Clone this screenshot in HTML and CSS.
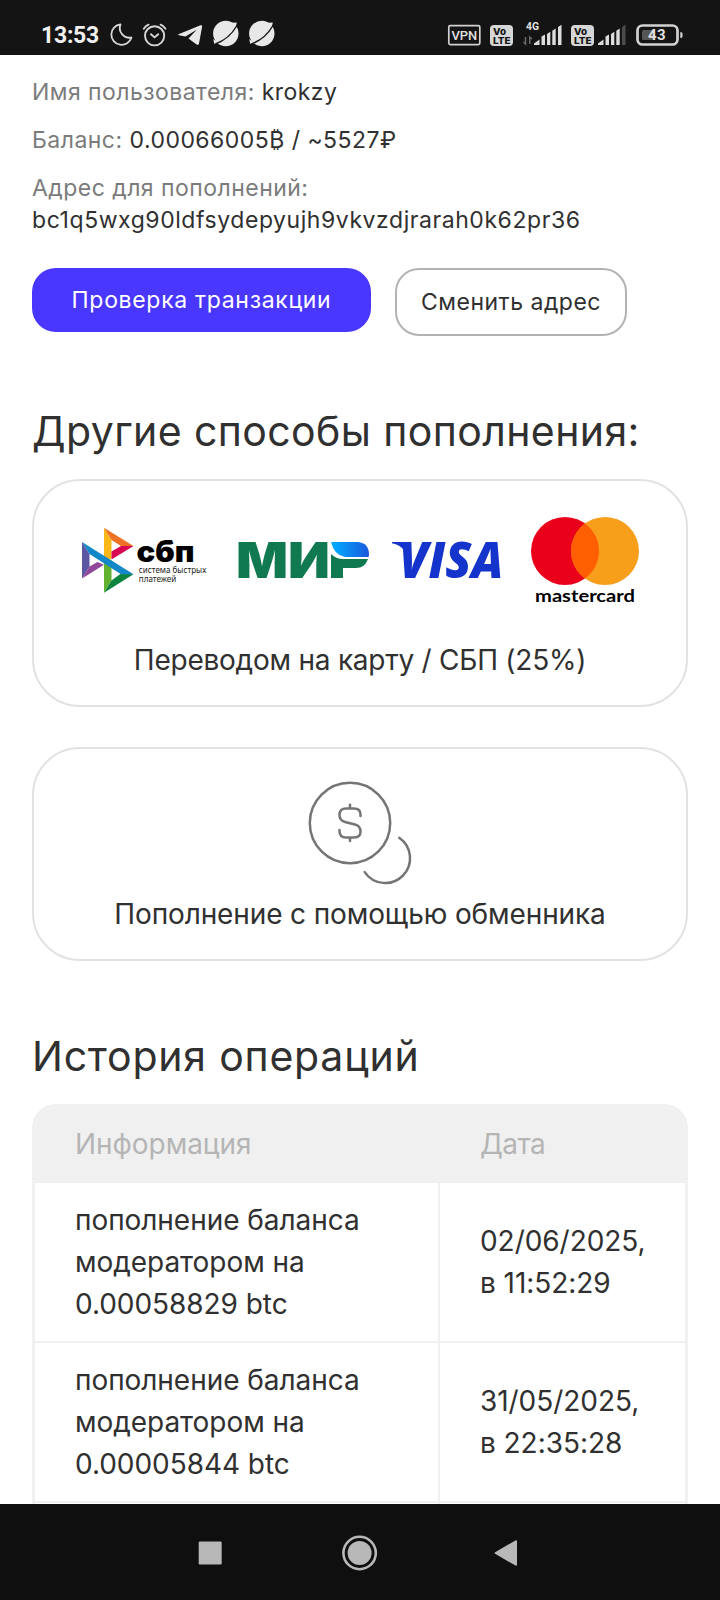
FILE: index.html
```html
<!DOCTYPE html>
<html lang="ru">
<head>
<meta charset="utf-8">
<title>Баланс</title>
<link rel="stylesheet" href="styles.css">
</head>
<body>
<header class="status">
  <span class="clock">13:53</span>
  <svg class="status-left" width="170" height="30" viewBox="108 20 170 30" fill="none">
    <path d="M120.500 24.300A10.300 10.300 0 1 0 131.500 37.500A9.800 9.800 0 0 1 120.500 24.300Z" stroke="#d6d6d6" stroke-width="1.800" stroke-linejoin="round"/>
    <g stroke="#d6d6d6" stroke-width="1.900" stroke-linecap="round" stroke-linejoin="round">
      <circle cx="154.600" cy="35.800" r="9.600"/>
      <path d="M143.800 28.700Q145.500 26 148.600 24.700M165.400 28.700Q163.700 26 160.600 24.700M151 34.200l3.600 3.200 3.600-3.200"/>
    </g>
    <path d="M178.500 34.200L200.500 25.300Q202.500 24.600 202.100 26.800L199 43.500Q198.500 45.600 196.600 44.400L188.500 38.600L196.800 29.800L185.400 36.600L179 35.200Q177.600 34.700 178.500 34.200Z" fill="#e8e8e8"/>
    <g id="planet">
      <circle cx="225.800" cy="33.500" r="12.700" fill="#e8e8e8"/>
      <path d="M232 22.800L236.800 22.400L235.800 27ZM213.300 39L214.200 43.800L218.500 43Z" fill="#e8e8e8"/>
      <path d="M215.500 43.800C224 41 232 34 237 25.500" stroke="#141414" stroke-width="1.400"/>
    </g>
    <use href="#planet" x="36"/>
  </svg>
  <svg class="status-right" width="240" height="30" viewBox="446 20 240 30" fill="none">
    <rect x="448.800" y="25.600" width="31" height="19" rx="1.500" stroke="#d0d0d0" stroke-width="1.700"/>
    <text x="451.500" y="40" class="st" font-size="12.800" textLength="25.800" lengthAdjust="spacingAndGlyphs">VPN</text>
    <g id="volte"><rect x="490" y="25" width="23" height="21" rx="4" fill="#d6d6d6"/>
    <text x="493" y="34.500" class="volte" font-size="9.500" textLength="13" lengthAdjust="spacingAndGlyphs">Vo</text>
    <text x="493" y="43.600" class="volte" font-size="9.500" textLength="17.500" lengthAdjust="spacingAndGlyphs">LTE</text></g>
    <use href="#volte" x="81"/>
    <text x="526" y="30" class="st bold" font-size="10" textLength="13" lengthAdjust="spacingAndGlyphs">4G</text>
    <path d="M525.500 37v7l-2-2M529.800 44v-7l2 2" stroke="#6a6a6a" stroke-width="1.500"/>
    <g fill="#dcdcdc">
      <path d="M534 45V43.600L539.500 39.500V45ZM541.500 45V36.500L545 34.500V45ZM547 45V34L550.300 31.800V45ZM552.300 45V30.800L555.700 28.600V45ZM558 45V27L561.500 24.800V45Z"/>
      <path d="M598 45V43.600L603.500 39.500V45ZM605.500 45V36.500L609 34.500V45ZM611 45V34L614.300 31.800V45ZM616.300 45V30.800L619.700 28.600V45Z"/>
    </g>
    <path d="M622 45V27L625.500 24.800V45Z" fill="#4c4c4c"/>
    <rect x="637.500" y="25.500" width="40" height="19" rx="5" stroke="#d2d2d2" stroke-width="2.700"/>
    <rect x="642" y="30" width="12" height="10" rx="1.500" fill="#555"/>
    <path d="M680.300 32q2.200 0 2.200 1.500v3q0 1.500-2.200 1.500z" fill="#d2d2d2"/>
    <text x="648" y="40.200" class="st bold" font-size="15" textLength="17.500">43</text>
  </svg>
</header>
<main class="page">
  <section class="account">
    <p class="user">Имя пользователя: <span class="val">krokzy</span></p>
    <p>Баланс: <span class="val">0.00066005₿ / ~5527₽</span></p>
    <p>Адрес для пополнений: <span class="val addr">bc1q5wxg90ldfsydepyujh9vkvzdjrarah0k62pr36</span></p>
  </section>
  <div class="actions">
    <button class="btn primary">Проверка транзакции</button>
    <button class="btn outline">Сменить адрес</button>
  </div>
  <h2 class="title other">Другие способы пополнения:</h2>
  <a class="card pay">
    <svg width="564" height="96" viewBox="78 514 564 96">
      <defs>
        <linearGradient id="mir" x1="0" x2="1"><stop offset=".1" stop-color="#03a7ff"/><stop offset="1" stop-color="#1959da"/></linearGradient>
      </defs>
      <path d="M82 542L89.500 554V566.500L82 578.500Z" fill="#5b57a2"/>
      <path d="M82 578.500L89.500 566.500L97.500 562L104 564.800Z" fill="#90489a"/>
      <path d="M104 527.800L111.500 540V558L104 566Z" fill="#fab718"/>
      <path d="M104 527.800L133.500 546H121L111.500 540Z" fill="#ee7125"/>
      <path d="M121 546H133.500L111.500 559.500V551.500Z" fill="#d90751"/>
      <path d="M104 560H111.500V580.500L104 592.800Z" fill="#63b22f"/>
      <path d="M104 592.800L133.500 574.300L121 573.500L111.500 580.500Z" fill="#0c8440"/>
      <path d="M82 542L133.500 574.300H121L89.500 554Z" fill="#1487c9"/>
      <text x="136.500" y="562" class="sbp" font-size="29.500" textLength="58" lengthAdjust="spacingAndGlyphs">сбп</text>
      <text x="138.800" y="573.300" class="tiny" textLength="67.500" lengthAdjust="spacingAndGlyphs">система быстрых</text>
      <text x="138.800" y="581.600" class="tiny" textLength="37.500" lengthAdjust="spacingAndGlyphs">платежей</text>
      <text x="236" y="578" class="mir" font-size="49.500" textLength="94" lengthAdjust="spacingAndGlyphs">МИ</text>
      <path d="M331 542H358Q369 543 369 555L368.500 557H345Q334 555 331 542Z" fill="url(#mir)"/>
      <path d="M331 554Q336 559 343 559H368Q365 568 356 568H343V578H331Z" fill="#10794f"/>
      <text x="399" y="577.500" class="visa" font-size="49" textLength="104.500" lengthAdjust="spacingAndGlyphs">VISA</text>
      <path d="M392 542H406L404 550Q400 545 392 543.300Z" fill="#1434cb"/>
      <circle cx="565" cy="551" r="34" fill="#eb001b"/>
      <circle cx="605" cy="551" r="34" fill="#f79e1b"/>
      <path d="M585 523.500a34 34 0 0 1 0 55a34 34 0 0 1 0-55Z" fill="#ff5f00"/>
      <text x="535" y="602" class="mc" font-size="17.500" textLength="100" lengthAdjust="spacingAndGlyphs">mastercard</text>
    </svg>
    <span class="label l1">Переводом на карту / СБП (25%)</span>
  </a>
  <a class="card exch">
    <svg width="106" height="106" viewBox="307 780 106 106" fill="none" stroke="#757575" stroke-width="2.500" stroke-linecap="round">
      <circle cx="350" cy="823" r="40.200"/>
      <path d="M360.500 816V814.500Q360.500 808.500 354 808.500H346Q339.500 808.500 339.500 815Q339.500 820.500 345 822L355 824.500Q360.500 826 360.500 831.500Q360.500 837.500 354 837.500H346Q339.500 837.500 339.500 831V830M350 808V804.800M350 838V841"/>
      <path d="M399.200 837.700A24.800 24.800 0 1 1 364.700 872.100"/>
    </svg>
    <span class="label l2">Пополнение с помощью обменника</span>
  </a>
  <h2 class="title history">История операций</h2>
  <div class="table">
    <div class="row head"><div class="cell info">Информация</div><div class="cell when">Дата</div></div>
    <div class="row"><div class="cell info">пополнение баланса<br>модератором на<br>0.00058829 btc</div><div class="cell date">02/06/2025,<br>в 11:52:29</div></div>
    <div class="row"><div class="cell info">пополнение баланса<br>модератором на<br>0.00005844 btc</div><div class="cell date">31/05/2025,<br>в 22:35:28</div></div>
    <div class="row"><div class="cell info"></div></div>
  </div>
</main>
<nav class="navbar">
  <svg width="24" height="36" viewBox="0 0 24 36"><rect x=".7" y="6.500" width="23" height="23" rx="1.200" fill="#b8b8b8"/></svg>
  <svg width="36" height="36" viewBox="0 0 36 36"><circle cx="17.600" cy="18" r="16.200" fill="none" stroke="#b8b8b8" stroke-width="2.600"/><circle cx="17.600" cy="18" r="12" fill="#b8b8b8"/></svg>
  <svg class="back" width="24" height="36" viewBox="0 0 24 36"><path d="M1.600 18L22 6.300V29.700Z" fill="#b8b8b8" stroke="#b8b8b8" stroke-width="2" stroke-linejoin="round"/></svg>
</nav>
</body>
</html>
```
FILE: styles.css
```css
* { box-sizing: border-box; }
body {
  margin: 0;
  width: 720px;
  height: 1600px;
  overflow: hidden;
  display: flex;
  flex-direction: column;
  background: #fff;
  color: #303030;
  font-family: Inter, sans-serif;
}
.status {
  height: 55px;
  flex: none;
  display: flex;
  padding: 20px 34px 0 41px;
  background: #141414;
}
.clock {
  width: 67px;
  color: #f0f0f0;
  font: 700 23px/31px Roboto, sans-serif;
  letter-spacing: -.25px;
}
.status-right { margin-left: auto; }
.st { fill: #e0e0e0; font-family: Roboto, sans-serif; font-weight: 500; }
.bold { font-weight: 700; }
.volte { fill: #141414; font-family: Inter, sans-serif; font-weight: 800; }
.page {
  flex: 1;
  min-height: 0;
  overflow: hidden;
  padding: 21px 32px 0;
}
.account {
  display: flex;
  flex-direction: column;
  gap: 16px;
  color: #7b7b7b;
  font-size: 23px;
  line-height: 32px;
  letter-spacing: .47px;
}
.account p { margin: 0; }
.user { letter-spacing: .45px; }
.val { color: #303030; }
.addr { display: block; letter-spacing: .56px; }
.actions {
  display: flex;
  align-items: flex-start;
  gap: 24px;
  margin-top: 32px;
}
.btn {
  padding: 16px 0;
  border: 0;
  border-radius: 24px;
  font: 400 23px/32px Inter, sans-serif;
  white-space: nowrap;
}
.primary { width: 339px; background: #4936ff; color: #fff; letter-spacing: .68px; }
.outline { width: 232px; background: #fff; color: #303030; border: 2px solid #b3b3b3; letter-spacing: .5px; }
.title {
  margin: 0;
  font-size: 41px;
  font-weight: 400;
  line-height: 50px;
  white-space: nowrap;
}
.other { margin-top: 70px; letter-spacing: .4px; }
.card {
  display: flex;
  flex-direction: column;
  align-items: center;
  border: 2px solid #e2e2e2;
  border-radius: 48px;
}
.pay { height: 228px; margin-top: 23px; padding-top: 33px; }
.exch { height: 214px; margin-top: 40px; padding-top: 31px; }
.label { font-size: 28px; line-height: 42px; white-space: nowrap; }
.l1 { margin-top: 29px; letter-spacing: -.24px; }
.l2 { margin-top: 7px; letter-spacing: -.12px; }
.history { margin-top: 70px; letter-spacing: .78px; }
.table {
  height: 500px;
  margin-top: 23px;
  border: 3px solid #f0f0f0;
  border-radius: 24px;
  overflow: hidden;
  font-size: 28px;
  line-height: 42px;
}
.row { display: grid; grid-template-columns: 405px 1fr; border-bottom: 2px solid #f0f0f0; }
.head { background: #f0f0f0; color: #b5b5b5; height: 76px; border: 0; }
.cell { display: flex; align-items: center; padding: 16px 0 16px 40px; white-space: nowrap; letter-spacing: -.05px; }
.head .cell { padding: 15px 0 17px 40px; }
.when { letter-spacing: -.6px; }
.row:not(.head) .info { border-right: 2px solid #f0f0f0; }
.navbar {
  flex: none;
  height: 96px;
  display: flex;
  align-items: flex-start;
  gap: 120px;
  padding: 31px 0 0 198px;
  background: #0f0f0f;
}
.back { margin-left: -4px; }
.sbp { font-family: Inter, sans-serif; font-weight: 900; }
.tiny { font-family: "Noto Sans", sans-serif; font-size: 8px; fill: #222; }
.mir { font-family: Inter, sans-serif; font-weight: 900; fill: #10794f; }
.visa { font-family: "Open Sans", sans-serif; font-weight: 800; font-style: italic; fill: #1434cb; }
.mc { font-family: Lato, sans-serif; font-weight: 700; }
```
